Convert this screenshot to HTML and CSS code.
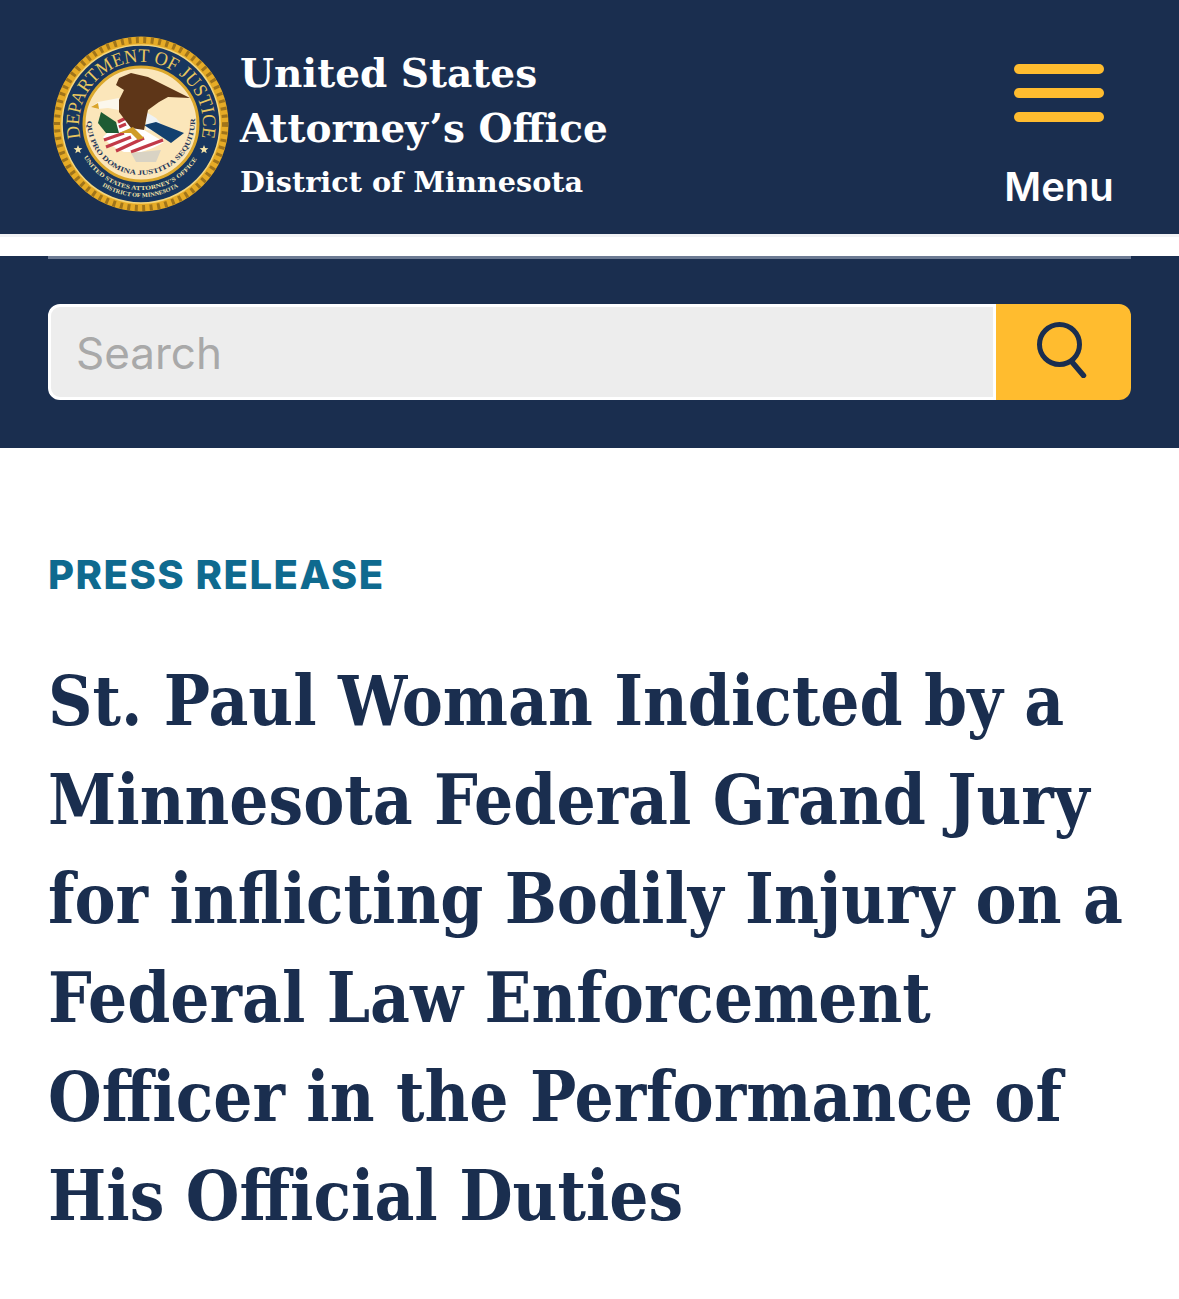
FILE: index.html
```html
<!DOCTYPE html>
<html lang="en">

<head>
    <meta charset="UTF-8" />
    <title>St. Paul Woman Indicted | District of Minnesota</title>
    <link rel="stylesheet" href="styles.css">
</head>

<body>

    <div class="header">
        <div class="brand">
            <svg class="seal" viewBox="0 0 176 176" aria-label="Department of Justice seal">
                <defs>
                    <path id="sealTop" d="M 27.6 102 A 62 62 0 1 1 148.4 102" />
                    <path id="sealMotto" d="M 34 85 A 54 54 0 1 0 142 85" />
                    <path id="sealLow" d="M 30.8 121 A 66 66 0 0 0 145.2 121" />
                    <path id="sealLow2" d="M 49.3 150 A 73 73 0 0 0 126.7 150" />
                </defs>
                <circle cx="88" cy="88" r="87.5" fill="#e6ab26" />
                <circle cx="88" cy="88" r="84" fill="none" stroke="#a0741a" stroke-width="6" stroke-dasharray="3 4.5" />
                <circle cx="88" cy="88" r="79" fill="#17365f" stroke="#f3d67e" stroke-width="1.5" />
                <circle cx="88" cy="88" r="57" fill="#fbe6ba" stroke="#dba82d" stroke-width="3" />
                <text class="seal-top"><textPath href="#sealTop" textLength="222" lengthAdjust="spacingAndGlyphs">DEPARTMENT OF JUSTICE</textPath></text>
                <text class="seal-low"><textPath href="#sealLow" textLength="136" lengthAdjust="spacingAndGlyphs">UNITED STATES ATTORNEY'S OFFICE</textPath></text>
                <text class="seal-low"><textPath href="#sealLow2" textLength="80" lengthAdjust="spacingAndGlyphs">DISTRICT OF MINNESOTA</textPath></text>
                <text class="seal-motto"><textPath href="#sealMotto" textLength="172" lengthAdjust="spacingAndGlyphs">QUI PRO DOMINA JUSTITIA SEQUITUR</textPath></text>
                <path class="seal-star" d="M25 109 L26.2 112 L29.4 112.2 L26.9 114.2 L27.7 117.3 L25 115.6 L22.3 117.3 L23.1 114.2 L20.6 112.2 L23.8 112 Z" />
                <path class="seal-star" d="M151 109 L152.2 112 L155.4 112.2 L152.9 114.2 L153.7 117.3 L151 115.6 L148.3 117.3 L149.1 114.2 L146.6 112.2 L149.8 112 Z" />
                <!-- shield -->
                <path d="M50 101 L71 81 L91 94 L111 106 Q100 113 88 116 L71 116 Q58 111 50 101 Z" fill="#fff" />
                <path d="M51 104 L71 97 M53 111 L78 101 M63 115 L91 102 M78 116 L110 104 M65 86 L73 82 M66 91 L73 88" stroke="#c23a48" stroke-width="3.2" fill="none" />
                <path d="M93 76 L103 82 L115 96 L93 94 Z" fill="#eef2f4" />
                <path d="M91 89 L103 86 L131 97 L118 107 L103 97 Z" fill="#12406f" />
                <!-- eagle -->
                <path d="M66 42 L78 37 L95 41 L115 51 L137 62 L115 61 L106 66 L95 74 L91 94 L78 92 L66 76 L66 64 L71 54 L63 49 Z" fill="#5e3618" />
                <path d="M38 71 L45 66 L66 62 L66 74 L55 72 L45 73 Z" fill="#fbf7ec" />
                <path d="M38 71 L45 67 L46 73 Z" fill="#dba52b" />
                <!-- olive branch and talons -->
                <path d="M48 76 L63 86 L66 97 L53 97 L45 87 Z" fill="#1e5c34" />
                <path d="M66 97 L80 91 L83 94 L91 102 L85 104 L78 97 Z" fill="#d09c28" />
                <!-- arrows -->
                <path d="M78 117 L108 114 L103 126 L83 126 Z" fill="#d9d3c4" />
            </svg>
            <div class="brand-text">
                <div class="brand-name">United States<br>Attorney’s Office</div>
                <div class="brand-district">District of Minnesota</div>
            </div>
        </div>
        <button class="menu-btn">
            <span class="menu-bars"><span></span><span></span><span></span></span>
            <span class="menu-label">Menu</span>
        </button>
    </div>

    <div class="gap"></div>

    <div class="search-band">
        <div class="search-rule"></div>
        <div class="search-box">
            <input class="search-input" type="text" placeholder="Search" />
            <button class="search-btn" aria-label="Search">
                <svg class="search-icon" width="50" height="56" viewBox="0 0 50 56">
                    <circle cx="22.5" cy="22.5" r="20" fill="none" stroke="#1a2e4f" stroke-width="5" />
                    <path d="M35 40 L46.5 53.5" stroke="#1a2e4f" stroke-width="5.5" stroke-linecap="round" />
                </svg>
            </button>
        </div>
    </div>

    <div class="content">
        <div class="eyebrow">PRESS RELEASE</div>
        <h1 class="title">St. Paul Woman Indicted by a<br>Minnesota Federal Grand Jury<br>for inflicting Bodily Injury on a<br>Federal Law Enforcement<br>Officer in the Performance of<br>His Official Duties</h1>
    </div>

</body>

</html>
```

FILE: styles.css
```css
* {
    box-sizing: border-box;
}

body {
    margin: 0;
    background: #fff;
    font-family: Inter, Arial, sans-serif;
    color: #1a2e4f;
}

.header {
    height: 234px;
    background: #1a2e4f;
    padding: 36px 48px 0 52px;
    display: flex;
    justify-content: space-between;
    align-items: flex-start;
}

.brand {
    display: flex;
    gap: 10px;
}

.seal {
    width: 178px;
    height: 176px;
}

.seal text {
    font-family: "Liberation Serif", serif;
}

.seal-top {
    font-size: 19px;
    fill: #e8c65e;
}

.seal-low {
    font-size: 6px;
    font-weight: bold;
    fill: #f3e3a8;
}

.seal-motto {
    font-size: 7px;
    font-weight: bold;
    fill: #26385a;
}

.seal-star {
    fill: #f3e3a8;
}

.brand-text {
    color: #fff;
    font-family: "DejaVu Serif", serif;
    font-weight: bold;
    padding-top: 10px;
}

.brand-name {
    font-size: 39px;
    line-height: 55px;
}

.brand-district {
    font-size: 28.7px;
    line-height: 52px;
}

.menu-btn {
    width: 110px;
    margin-right: 17px;
    padding: 28px 0 0;
    background: none;
    border: none;
    color: #fff;
    font-family: inherit;
    display: flex;
    flex-direction: column;
    align-items: center;
}

.menu-bars {
    display: flex;
    flex-direction: column;
    gap: 14px;
}

.menu-bars span {
    display: block;
    width: 90px;
    height: 10px;
    border-radius: 5px;
    background: #ffbc2f;
}

.menu-label {
    margin-top: 41px;
    font-size: 40px;
    line-height: 48px;
    font-weight: 600;
}

.gap {
    height: 22px;
    border-top: 3px solid #f1f2f4;
}

.search-band {
    height: 192px;
    background: #1a2e4f;
    padding: 0 48px;
}

.search-rule {
    height: 3px;
    background: #6c7a93;
}

.search-box {
    margin-top: 45px;
    height: 96px;
    display: flex;
}

.search-input {
    flex: 1;
    min-width: 0;
    height: 96px;
    padding: 2px 26px 0 25px;
    background: #ededed;
    border: 3px solid #fff;
    border-radius: 12px 0 0 12px;
    font-family: Inter, Arial, sans-serif;
    font-size: 44px;
    outline: none;
}

.search-input::placeholder {
    color: #a9a9a9;
    opacity: 1;
}

.search-btn {
    width: 135px;
    height: 96px;
    padding: 0 3px 4px 0;
    background: #ffbc2f;
    border: none;
    border-radius: 0 12px 12px 0;
    display: flex;
    align-items: center;
    justify-content: center;
}

.content {
    padding: 101px 48px 0;
}

.eyebrow {
    font-size: 40px;
    line-height: 52px;
    font-weight: 800;
    letter-spacing: 1.5px;
    color: #0f6a8f;
}

.title {
    margin: 51px 0 0;
    font-family: "DejaVu Serif Condensed", "DejaVu Serif", serif;
    font-size: 68.5px;
    line-height: 99px;
    font-weight: 700;
    color: #1a2e4f;
}
```
